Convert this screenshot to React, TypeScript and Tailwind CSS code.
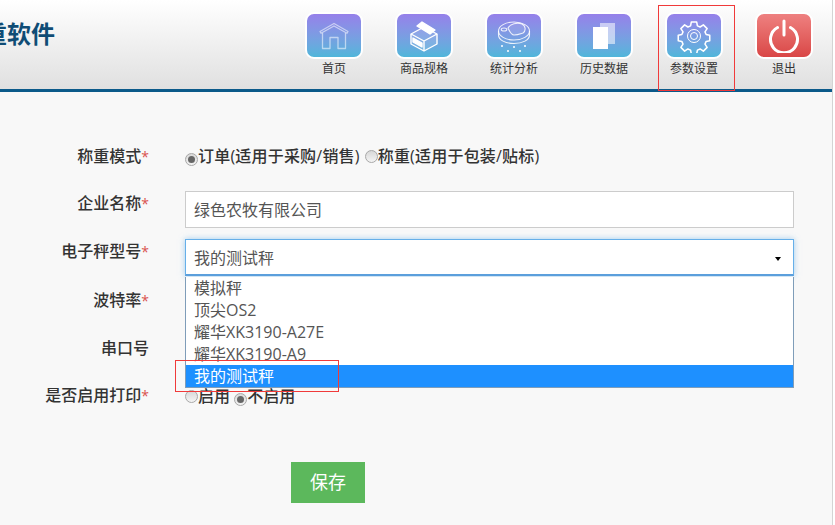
import React from "react";

const font = { fontFamily: '"Open Sans","Noto Sans CJK SC",sans-serif' };

function Tile({ red, children }: { red?: boolean; children: React.ReactNode }) {
  return (
    <div
      className={
        "w-[58px] h-[47px] rounded-[9px] border-2 border-white flex items-center justify-center " +
        (red ? "bg-gradient-to-b from-[#ee8080] to-[#d94646]" : "bg-gradient-to-b from-[#9580ea] to-[#4fb6da]")
      }
    >
      {children}
    </div>
  );
}

const House = () => (
  <svg width="30" height="28" viewBox="0 0 30 28" fill="none" stroke="#fff" strokeOpacity="0.55" strokeWidth="1.300" strokeLinejoin="round">
    <path d="M1 9.500 15 1.500l14 8-1 1.800L15 4 2 11.300z" />
    <path d="M3.500 11v15.500h7.500V15.500h8v11h7.500V11" />
  </svg>
);

const Box = () => (
  <svg width="28" height="32" viewBox="0 0 28 32" fill="none" stroke="#fff" strokeWidth="1.400" strokeLinejoin="round">
    <path d="M1 14 14 7l13 7v10l-13 7-13-7z" fill="#fff" fillOpacity="0.12" />
    <path d="M1 14l13 7 13-7M14 21v10" />
    <path d="M7 6l5-4 13 8-5 4z" fill="#fff" />
    <path d="M3 18l9 5v4l-9-5z" fill="#fff" />
  </svg>
);

const Scale = () => (
  <svg width="34" height="34" viewBox="0 0 34 34" fill="none" stroke="#fff" strokeOpacity="0.85" strokeWidth="1.100">
    <ellipse cx="17" cy="12" rx="15.500" ry="9" />
    <path d="M1.500 12v4c0 5 7 8.500 15.500 8.500s15.500-3.500 15.500-8.500v-4" />
    <path d="M11 9c2-4 9-6 14-4 4 2 4 7 1 9-3 1-5 2-9 2-3 0-4-3-6-7z" fill="#fff" fillOpacity="0.1" />
    <ellipse cx="7" cy="10.500" rx="2.800" ry="1.500" />
    <g fill="#fff" stroke="none">
      <circle cx="5" cy="27" r="1" />
      <circle cx="17" cy="28" r="1" />
      <circle cx="28" cy="27" r="1" />
      <circle cx="11" cy="32" r="1" />
      <circle cx="23" cy="32" r="1" />
    </g>
  </svg>
);

const Docs = () => (
  <svg width="24" height="26" viewBox="0 0 24 26">
    <rect x="8" y="0" width="15" height="21" fill="#fff" fillOpacity="0.55" />
    <rect x="1" y="4" width="15" height="22" fill="#fff" />
  </svg>
);

const Gear = () => (
  <svg width="34" height="34" viewBox="0 0 34 34" fill="none" stroke="#fff" strokeWidth="1.700" strokeLinejoin="round">
    <path d="M14 1.500h6l.8 4.200 3 1.300 3.600-2.400 4.200 4.200-2.400 3.600 1.300 3 4 .8v6l-4 .8-1.300 3 2.400 3.600-4.200 4.200-3.600-2.400-3 1.300-.8 4h-6l-.8-4-3-1.300-3.600 2.400-4.200-4.200 2.400-3.600-1.300-3-4-.8v-6l4-.8 1.300-3-2.400-3.600 4.200-4.200 3.600 2.400 3-1.300z" transform="translate(1.700 1.700) scale(0.9)" />
    <circle cx="17" cy="17" r="6.500" strokeWidth="1" />
    <circle cx="17" cy="17" r="3.500" strokeWidth="1" />
  </svg>
);

const Power = () => (
  <svg width="32" height="34" viewBox="0 0 32 34" fill="none" stroke="#fff" strokeWidth="3" strokeLinecap="round">
    <path d="M9.500 8.500a13.500 13.500 0 1 0 13 0" />
    <path d="M16 2v14" />
  </svg>
);

const items: [string, React.ReactNode, boolean?][] = [
  ["首页", <House />],
  ["商品规格", <Box />],
  ["统计分析", <Scale />],
  ["历史数据", <Docs />],
  ["参数设置", <Gear />],
  ["退出", <Power />, true],
];

function Label({ text, star = true }: { text: string; star?: boolean }) {
  return (
    <div className="w-[149px] shrink-0 text-right text-[16px] font-medium text-[#333] leading-[24px]">
      {text}
      {star && <span className="text-[#d9534f] text-[14px]">*</span>}
    </div>
  );
}

function Radio({ on }: { on?: boolean }) {
  return (
    <span className="inline-flex w-[13px] h-[13px] rounded-full border border-[#a8a8a8] bg-gradient-to-b from-[#d8d8d8] to-[#f4f4f4] items-center justify-center align-[-1px]">
      {on && <span className="w-[7px] h-[7px] rounded-full bg-[#666]" />}
    </span>
  );
}

const options = ["模拟秤", "顶尖OS2", "耀华XK3190-A27E", "耀华XK3190-A9"];

export default function App() {
  return (
    <div className="relative w-[835px] h-[525px] overflow-hidden bg-white" style={font}>
      <div className="w-[833px] h-[525px] bg-[#f8f8f8] border-r border-[#d4d4d4]">
        <header className="h-[92px] border-b-[3px] border-[#0b5a8a] bg-gradient-to-b from-white to-[#e0e0e0] flex items-start justify-between">
          <div className="ml-[-17px] mt-[16px] text-[24px] leading-[36px] font-bold text-[#0f4c75]">重软件</div>
          <nav className="flex gap-[32px] mt-[12px] mr-[19px]">
            {items.map(([label, icon, red]) => (
              <div key={label} className="w-[58px] flex flex-col items-center">
                <Tile red={red}>{icon}</Tile>
                <div className="mt-[1px] text-[12px] leading-[18px] text-[#333] whitespace-nowrap">{label}</div>
              </div>
            ))}
          </nav>
        </header>

        <main className="relative pt-[52px]">
          <div className="flex h-[24px] items-center">
            <Label text="称重模式" />
            <div className="ml-[36px] text-[16px] font-medium text-[#333] whitespace-nowrap leading-[24px] tracking-[0.2px]">
              <Radio on />订单(适用于采购/销售)<span className="inline-block w-[5px]" /><Radio />称重(适用于包装/贴标)
            </div>
          </div>

          <div className="flex mt-[23px]">
            <Label text="企业名称" />
            <div className="ml-[36px] w-[609px] h-[37px] border border-[#ccc] bg-white px-[8px] text-[16px] leading-[36px] text-[#555]">
              绿色农牧有限公司
            </div>
          </div>

          <div className="flex mt-[11px]">
            <Label text="电子秤型号" />
            <div className="relative ml-[36px] w-[609px] h-[37px] border border-[#66afe9] shadow-[0_0_6px_rgba(102,175,233,0.6)] border-b-2 border-b-[#5b9fdc] bg-white px-[8px] text-[16px] leading-[36px] text-[#555]">
              我的测试秤
              <span className="absolute right-[12px] top-[17px] w-0 h-0 border-x-[3px] border-t-[4px] border-x-transparent border-t-black" />
              <div className="absolute z-10 left-[-1px] top-[37px] w-[609px] border border-[#7f9db9] border-t-0 bg-white text-[16px] leading-[22px] text-[#555]">
                {options.map((o) => (
                  <div key={o} className="px-[8px] h-[22px]">{o}</div>
                ))}
                <div className="px-[8px] h-[22px] bg-[#1e90ff] text-white">我的测试秤</div>
              </div>
            </div>
          </div>

          <div className="flex mt-[12px]"><Label text="波特率" /></div>
          <div className="flex mt-[23px]"><Label text="串口号" star={false} /></div>
          <div className="flex mt-[23px] items-center">
            <Label text="是否启用打印" />
            <div className="ml-[36px] text-[16px] font-medium text-[#333] whitespace-nowrap leading-[24px]">
              <Radio />启用 <Radio on />不启用
            </div>
          </div>

          <div className="ml-[291px] mt-[54px] w-[74px] h-[41px] bg-[#5cb85c] text-white text-[18px] leading-[41px] text-center">
            保存
          </div>
        </main>
      </div>

      <div className="absolute left-[658px] top-[5px] w-[77px] h-[86px] border border-[#f03a3a]" />
      <div className="absolute z-20 left-[175px] top-[360px] w-[164px] h-[32px] border border-[#f03a3a]" />
    </div>
  );
}
